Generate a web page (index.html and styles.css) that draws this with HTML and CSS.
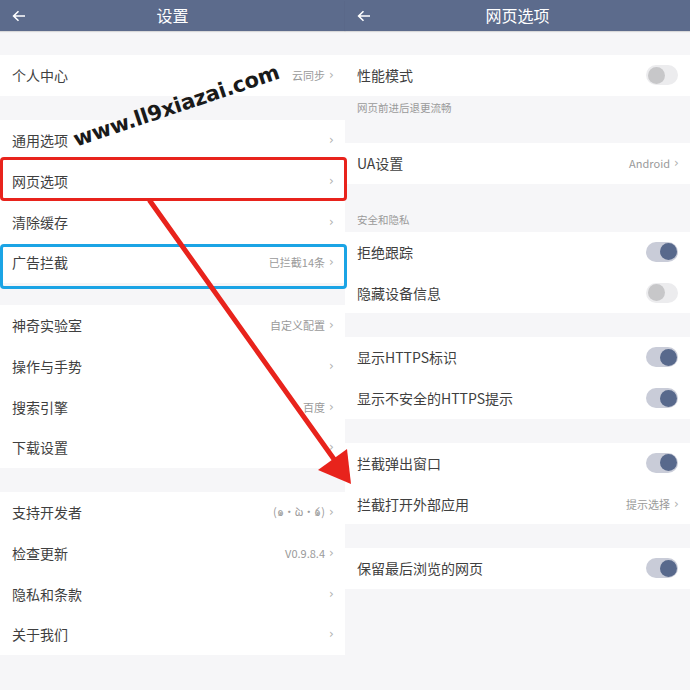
FILE: index.html
```html
<!DOCTYPE html>
<html lang="zh">
<head>
<meta charset="utf-8">
<link rel="stylesheet" href="styles.css">
</head>
<body>
<div class="screen">
  <section class="panel">
    <header class="bar">
      <svg class="back" viewBox="0 0 14 12" width="14" height="12"><path d="M13 6H2M6.5 1.2L1.6 6l4.9 4.8" fill="none" stroke="#fff" stroke-width="1.6"/></svg>
      <span class="title">设置</span>
    </header>
    <div class="gap"></div>
    <div class="group">
      <div class="row"><span class="label">个人中心</span><span class="val">云同步</span><span class="chev">›</span></div>
    </div>
    <div class="gap"></div>
    <div class="group">
      <div class="row"><span class="label">通用选项</span><span class="chev">›</span></div>
      <div class="row"><span class="label">网页选项</span><span class="chev">›</span></div>
      <div class="row"><span class="label">清除缓存</span><span class="chev">›</span></div>
      <div class="row"><span class="label">广告拦截</span><span class="val">已拦截14条</span><span class="chev">›</span></div>
    </div>
    <div class="gap gap-s"></div>
    <div class="group">
      <div class="row"><span class="label">神奇实验室</span><span class="val">自定义配置</span><span class="chev">›</span></div>
      <div class="row"><span class="label">操作与手势</span><span class="chev">›</span></div>
      <div class="row"><span class="label">搜索引擎</span><span class="val">百度</span><span class="chev">›</span></div>
      <div class="row"><span class="label">下载设置</span><span class="chev">›</span></div>
    </div>
    <div class="gap"></div>
    <div class="group">
      <div class="row"><span class="label">支持开发者</span><span class="val">(๑•̀ω•́๑)</span><span class="chev">›</span></div>
      <div class="row"><span class="label">检查更新</span><span class="val">V0.9.8.4</span><span class="chev">›</span></div>
      <div class="row"><span class="label">隐私和条款</span><span class="chev">›</span></div>
      <div class="row"><span class="label">关于我们</span><span class="chev">›</span></div>
    </div>
  </section>

  <section class="panel">
    <header class="bar">
      <svg class="back" viewBox="0 0 14 12" width="14" height="12"><path d="M13 6H2M6.5 1.2L1.6 6l4.9 4.8" fill="none" stroke="#fff" stroke-width="1.6"/></svg>
      <span class="title">网页选项</span>
    </header>
    <div class="gap"></div>
    <div class="group">
      <div class="row"><span class="label">性能模式</span><span class="toggle"></span></div>
    </div>
    <div class="desc">网页前进后退更流畅</div>
    <div class="group">
      <div class="row"><span class="label">UA设置</span><span class="val">Android</span><span class="chev">›</span></div>
    </div>
    <div class="section">安全和隐私</div>
    <div class="group">
      <div class="row"><span class="label">拒绝跟踪</span><span class="toggle on"></span></div>
      <div class="row"><span class="label">隐藏设备信息</span><span class="toggle"></span></div>
    </div>
    <div class="gap"></div>
    <div class="group">
      <div class="row"><span class="label">显示HTTPS标识</span><span class="toggle on"></span></div>
      <div class="row"><span class="label">显示不安全的HTTPS提示</span><span class="toggle on"></span></div>
    </div>
    <div class="gap"></div>
    <div class="group">
      <div class="row"><span class="label">拦截弹出窗口</span><span class="toggle on"></span></div>
      <div class="row"><span class="label">拦截打开外部应用</span><span class="val">提示选择</span><span class="chev">›</span></div>
    </div>
    <div class="gap"></div>
    <div class="group">
      <div class="row"><span class="label">保留最后浏览的网页</span><span class="toggle on"></span></div>
    </div>
  </section>

  <div class="box box-red"></div>
  <div class="box box-blue"></div>
  <svg class="arrow" viewBox="0 0 690 690" width="690" height="690">
    <line x1="150" y1="201" x2="336" y2="462" stroke="#e8231c" stroke-width="5" stroke-linecap="round"/>
    <polygon points="351,484 318,470 347,449" fill="#e8231c"/>
  </svg>
  <div class="watermark">www.ll9xiazai.com</div>
</div>
</body>
</html>
```

FILE: styles.css
```css
html, body {
  margin: 0;
  padding: 0;
  background: #f6f6f8;
}
body {
  font-family: "Noto Sans CJK SC", "Noto Sans", sans-serif;
  color: #333;
}
.screen {
  position: relative;
  width: 690px;
  height: 690px;
  display: flex;
  overflow: hidden;
}
.panel {
  width: 345px;
  display: flex;
  flex-direction: column;
  background: #f6f6f8;
}
.bar {
  height: 31px;
  background: #5c6b8c;
  display: flex;
  align-items: center;
  position: relative;
  box-shadow: 0 1px 1px rgba(0,0,0,0.12);
}
.back {
  margin-left: 12px;
}
.title {
  position: absolute;
  left: 0;
  right: 0;
  text-align: center;
  color: #fff;
  font-size: 16px;
  line-height: 31px;
}
.gap {
  height: 24px;
}
.gap-s {
  height: 22px;
}
.group {
  background: #fff;
  display: flex;
  flex-direction: column;
}
.row {
  height: 40.75px;
  display: flex;
  align-items: center;
  padding: 0 8px 0 12px;
}
.label {
  flex: 1;
  font-size: 14px;
  color: #3f3f3f;
}
.val {
  font-size: 11px;
  color: #9a9a9a;
  margin-right: 4px;
}
.chev {
  font-family: "DejaVu Sans", sans-serif;
  font-size: 12px;
  color: #b0b0b0;
  width: 8px;
  line-height: 1;
}
.toggle {
  width: 32px;
  height: 20px;
  border-radius: 10px;
  background: #ececee;
  position: relative;
  margin-right: 4px;
}
.toggle::after {
  content: "";
  position: absolute;
  top: 1.5px;
  left: 1.5px;
  width: 17px;
  height: 17px;
  border-radius: 50%;
  background: #c7c7c9;
}
.toggle.on {
  background: #c9ccd8;
}
.toggle.on::after {
  left: auto;
  right: 1px;
  background: #58698c;
}
.desc {
  height: 24px;
  margin-bottom: 23px;
  padding-left: 12px;
  font-size: 10.5px;
  color: #9a9a9a;
  display: flex;
  align-items: center;
}
.section {
  height: 24px;
  margin-top: 24px;
  padding-left: 12px;
  font-size: 10.5px;
  color: #9a9a9a;
  display: flex;
  align-items: center;
}
.box {
  position: absolute;
  left: 0;
  border-radius: 4px;
  border: 3px solid;
  box-sizing: border-box;
}
.box-red {
  top: 157px;
  height: 44px;
  width: 347px;
  border-color: #e8231c;
}
.box-blue {
  top: 244px;
  height: 45px;
  width: 347px;
  border-color: #1ba4e5;
}
.arrow {
  position: absolute;
  left: 0;
  top: 0;
  pointer-events: none;
}
.watermark {
  position: absolute;
  left: 74px;
  top: 128px;
  font-family: "DejaVu Sans", sans-serif;
  font-weight: bold;
  font-size: 21px;
  color: #1a1a1a;
  transform: rotate(-18.5deg);
  transform-origin: left center;
  letter-spacing: -0.2px;
}
```
